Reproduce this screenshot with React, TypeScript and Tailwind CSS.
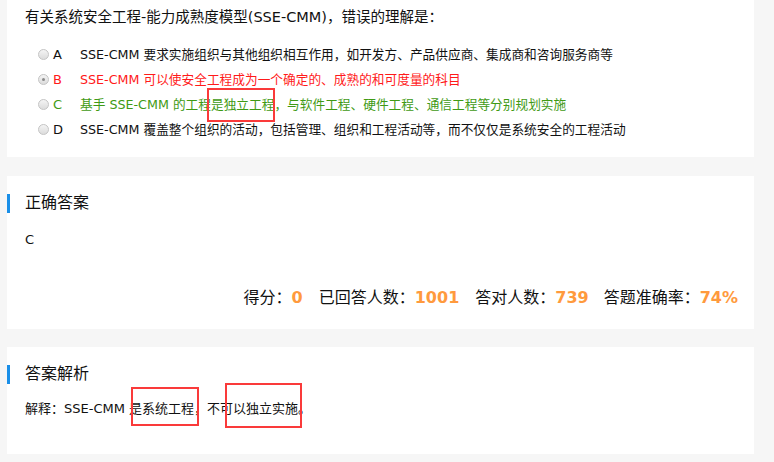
import React from "react";

const Radio = ({ checked }: { checked?: boolean }) => (
  <span className="relative inline-block w-[11px] h-[11px] rounded-full border border-[#c4c4c4] bg-gradient-to-b from-[#f4f4f4] to-[#dcdcdc] shrink-0">
    {checked && (
      <span className="absolute left-[3px] top-[3px] w-[3px] h-[3px] rounded-full bg-[#8a8a8a]" />
    )}
  </span>
);

const options = [
  { k: "A", t: "SSE-CMM 要求实施组织与其他组织相互作用，如开发方、产品供应商、集成商和咨询服务商等", c: "text-[#111]" },
  { k: "B", t: "SSE-CMM 可以使安全工程成为一个确定的、成熟的和可度量的科目", c: "text-[#ff1a1a]", checked: true },
  { k: "C", t: "基手 SSE-CMM 的工程是独立工程，与软件工程、硬件工程、通信工程等分别规划实施", c: "text-[#3f9a14]" },
  { k: "D", t: "SSE-CMM 覆盖整个组织的活动，包括管理、组织和工程活动等，而不仅仅是系统安全的工程活动", c: "text-[#111]" },
];

export default function App() {
  return (
    <div className="relative w-[774px] h-[462px] overflow-hidden bg-[#f6f6f6] font-['DejaVu_Sans','Noto_Sans_CJK_SC',sans-serif] text-[#111]">
      <div className="flex flex-col pl-[7px] pr-[20px]">
        {/* Card 1 */}
        <div className="bg-white pl-[18px] pt-[7px] pb-[15px]">
          <div className="text-[14.5px] leading-[20px] whitespace-nowrap">有关系统安全工程-能力成熟度模型(SSE-CMM)，错误的理解是：</div>
          <div className="mt-[15px] flex flex-col pl-[13px]">
            {options.map((o) => (
              <div key={o.k} className={`flex items-center h-[25px] text-[12.7px] whitespace-nowrap ${o.c}`}>
                <Radio checked={o.checked} />
                <span className="ml-[4px] w-[27px] text-[13px]">{o.k}</span>
                <span>{o.t}</span>
              </div>
            ))}
          </div>
        </div>

        {/* Card 2 */}
        <div className="mt-[19px] bg-white pt-[17px] pb-[19px]">
          <div className="flex items-center h-[20px]">
            <span className="w-[3px] h-[19px] bg-[#1a8fe8]" />
            <span className="ml-[15px] text-[16px] leading-[20px]">正确答案</span>
          </div>
          <div className="mt-[17px] pl-[18px] text-[13px] leading-[20px]">C</div>
          <div className="mt-[36px] flex justify-end items-center h-[24px] text-[16px] whitespace-nowrap">
            <span>得分：</span>
            <span className="font-bold text-[#ff9a3d] mr-[16px]">0</span>
            <span>已回答人数：</span>
            <span className="font-bold text-[#ff9a3d] mr-[16px]">1001</span>
            <span>答对人数：</span>
            <span className="font-bold text-[#ff9a3d] mr-[15px]">739</span>
            <span>答题准确率：</span>
            <span className="font-bold text-[#ff9a3d] mr-[16px]">74%</span>
          </div>
        </div>

        {/* Card 3 */}
        <div className="mt-[18px] bg-white pt-[17px] pb-[35px]">
          <div className="flex items-center h-[20px]">
            <span className="w-[3px] h-[19px] bg-[#1a8fe8]" />
            <span className="ml-[15px] text-[16px] leading-[20px]">答案解析</span>
          </div>
          <div className="mt-[15px] pl-[18px] text-[13px] leading-[20px]">解释：SSE-CMM 是系统工程，不可以独立实施。</div>
        </div>
      </div>

      {/* red annotation boxes */}
      <div className="absolute left-[207px] top-[88px] w-[68px] h-[34px] border-2 border-[#fa3a3a]" />
      <div className="absolute left-[131px] top-[387px] w-[68px] h-[39px] border-2 border-[#fa3a3a]" />
      <div className="absolute left-[225px] top-[383px] w-[77px] h-[45px] border-2 border-[#fa3a3a]" />
    </div>
  );
}
